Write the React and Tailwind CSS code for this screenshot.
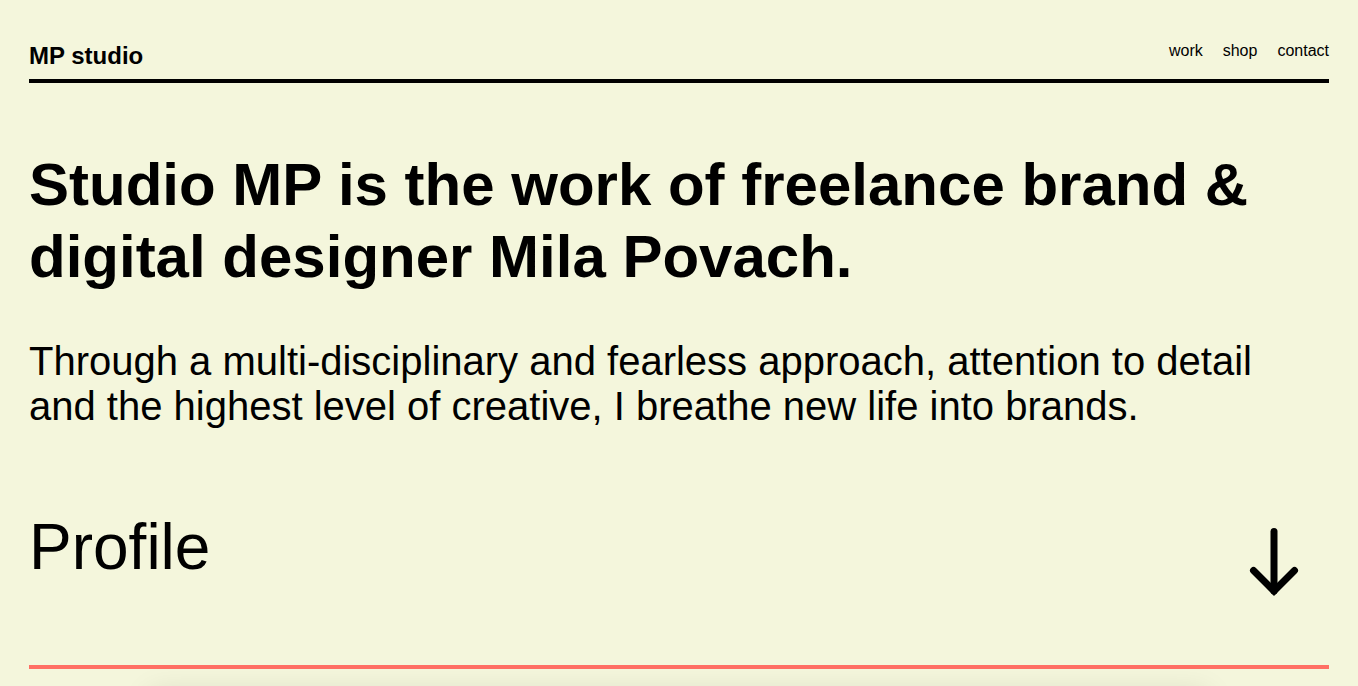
export default function App() {
  return (
    <div className="h-[686px] bg-[#f4f6dc] text-black overflow-hidden" style={{ fontFamily: '"Liberation Sans", Arial, sans-serif' }}>
      <div className="px-[29px]">
        <header className="flex items-end justify-between pt-[41px] pb-[9px] border-b-[4px] border-black">
          <div className="text-[24px] font-bold leading-[28px]">MP studio</div>
          <nav className="flex gap-[20px] text-[16px] leading-[20px] mb-[9px]">
            <a>work</a>
            <a>shop</a>
            <a>contact</a>
          </nav>
        </header>

        <h1 className="mt-[66px] text-[60px] font-bold leading-[72px]">
          Studio MP is the work of freelance brand &amp;<br />digital designer Mila Povach.
        </h1>

        <p className="mt-[46px] text-[40px] leading-[45px]">
          Through a multi-disciplinary and fearless approach, attention to detail<br />and the highest level of creative, I breathe new life into brands.
        </p>

        <div className="mt-[80px] flex items-start justify-between">
          <h2 className="text-[64px] leading-[77px]">Profile</h2>
          {/* scroll-down arrow */}
          <svg width="56" height="76" viewBox="0 0 56 76" className="mr-[27px] mt-[16px]" fill="none" stroke="black" strokeWidth="7" strokeLinecap="round" strokeLinejoin="miter">
            <path d="M28 6.5 V66" />
            <path d="M7.5 45.5 L28 66 L48.5 45.5" />
          </svg>
        </div>

        <div className="mt-[64px] h-[4px] bg-[#ff6f64]" />
      </div>
      <div className="mx-[150px] mt-[24px] h-[40px] bg-[#f4f6dc] shadow-[0_0_30px_rgba(0,0,0,0.12)]" />
    </div>
  );
}
